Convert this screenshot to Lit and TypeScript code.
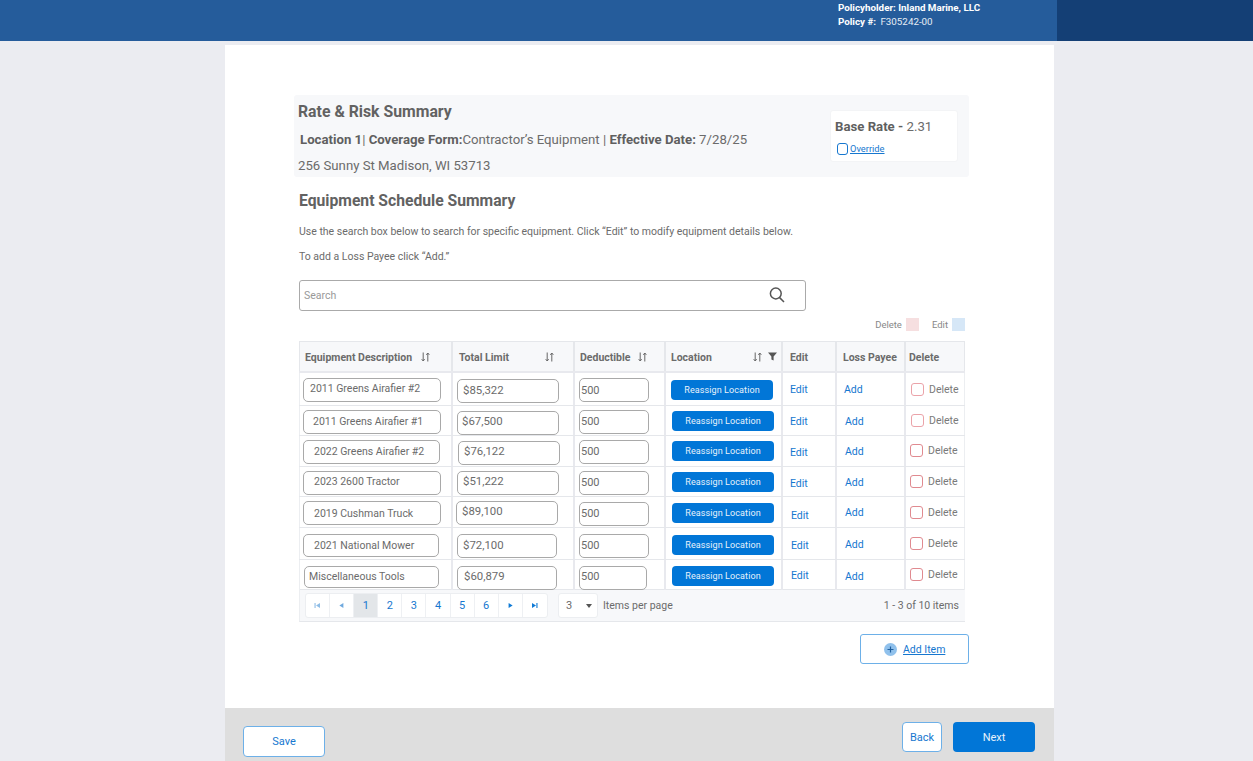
import { LitElement, html, css, svg } from "lit";
import { customElement } from "lit/decorators.js";

type Row = {
  name: string; limit: string; h: number;
  d: number[]; // x, y, w, h, text pad, text lift
  t: number[]; // x, y, w, text pad, text lift
  ded: number[]; // x, y, w, text lift
  btn: number[];
  edit: number[]; add: number[]; del: number[];
  delc: string;
};

const pink = "#eba3a9";
const red = "#e08a90";

const rows: Row[] = [
  { name: "2011 Greens Airafier #2", limit: "$85,322", h: 33, d: [3, 5, 138, 24, 6, 3], t: [4, 6, 102, 5, 2], ded: [4, 5, 70, 0], btn: [5, 7], edit: [7, 10], add: [7, 10], del: [5, 10], delc: pink },
  { name: "2011 Greens Airafier #1", limit: "$67,500", h: 30, d: [3, 4, 138, 24, 9, 2], t: [4, 5, 102, 4, 4], ded: [4, 4, 70, 2], btn: [6, 5], edit: [7, 9], add: [8, 9], del: [5, 8], delc: pink },
  { name: "2022 Greens Airafier #2", limit: "$76,122", h: 31, d: [3, 4, 137, 24, 10, 2], t: [5, 5, 102, 5, 5], ded: [4, 4, 70, 2], btn: [6, 5], edit: [7, 10], add: [8, 9], del: [4, 8], delc: red },
  { name: "2023 2600 Tractor", limit: "$51,222", h: 30, d: [3, 4, 138, 24, 10, 3], t: [4, 4, 102, 5, 5], ded: [4, 4, 70, 2], btn: [6, 5], edit: [7, 10], add: [8, 9], del: [4, 8], delc: red },
  { name: "2019 Cushman Truck", limit: "$89,100", h: 31, d: [3, 4, 138, 24, 10, 0], t: [3, 4, 102, 5, 4], ded: [4, 5, 70, 2], btn: [6, 6], edit: [8, 12], add: [8, 9], del: [4, 9], delc: red },
  { name: "2021 National Mower", limit: "$72,100", h: 32, d: [3, 6, 136, 23, 10, 0], t: [4, 6, 100, 5, 3], ded: [4, 6, 70, 2], btn: [6, 7], edit: [8, 11], add: [8, 10], del: [4, 9], delc: red },
  { name: "Miscellaneous Tools", limit: "$60,879", h: 30, d: [4, 6, 135, 22, 4, 2], t: [4, 6, 100, 6, 4], ded: [4, 6, 68, 3], btn: [6, 6], edit: [8, 9], add: [8, 10], del: [4, 8], delc: red },
];

const sortIcon = svg`<svg width="9" height="10" viewBox="0 0 9 10" fill="none" stroke="#666" stroke-width="1"><path d="M2.2 0.5V9M0.7 7.2L2.2 9L3.7 7.2"/><path d="M6.8 9.5V1M5.3 2.8L6.8 1L8.3 2.8"/></svg>`;
const filterIcon = svg`<svg width="9" height="9" viewBox="0 0 9 9"><path d="M0 .5H9L5.6 4.4V8.6L3.4 7.4V4.4Z" fill="#555"/></svg>`;
const first = svg`<svg width="7" height="7" viewBox="0 0 7 7" fill="#8fbde6"><path d="M.5 1H1.6V6H.5ZM6 1V6L2 3.5Z"/></svg>`;
const prev = svg`<svg width="7" height="7" viewBox="0 0 7 7" fill="#6fa9de"><path d="M5.4 1V6L1.4 3.5Z"/></svg>`;
const next = svg`<svg width="7" height="7" viewBox="0 0 7 7" fill="#0f7ad6"><path d="M1.6 1V6L5.6 3.5Z"/></svg>`;
const last = svg`<svg width="7" height="7" viewBox="0 0 7 7" fill="#0f7ad6"><path d="M1 1V6L5 3.5ZM5.4 1H6.5V6H5.4Z"/></svg>`;

@customElement("app-root")
export class AppRoot extends LitElement {
  static styles = css`
    :host { display: block; height: 761px; overflow: hidden; background: #ebecf1; font-family: Roboto, "Liberation Sans", sans-serif; color: #6b6b6b; }
    .top { height: 41px; background: #255c9b; display: flex; box-sizing: border-box; }
    .top-main { flex: 1; padding: 1px 0 0 838px; color: #fff; font-size: 9.8px; line-height: 14px; font-weight: 700; }
    .top-main .val { font-weight: 400; margin-left: 2px; color: #e6edf5; }
    .top-side { width: 196px; background: #143f75; }
    .panel { margin: 4px 0 0 225px; width: 829px; height: 663px; box-sizing: border-box; background: #fff; padding: 50px 0 0 69px; }
    .summary { width: 675px; height: 82px; background: #f7f8fa; border-radius: 3px; display: flex; justify-content: space-between; box-sizing: border-box; padding-left: 4px; }
    .summary h2 { margin: 7px 0 0; font-size: 15.8px; line-height: 20px; font-weight: 700; color: #626262; }
    .loc { margin: 8px 0 0 2px; font-size: 13.2px; line-height: 20px; }
    .addr { margin: 6px 0 0; font-size: 13.2px; line-height: 20px; }
    b { font-weight: 700; color: #5f5f5f; }
    .rate { width: 128px; height: 52px; margin: 15px 11px 0 0; background: #fff; border-radius: 3px; box-sizing: border-box; padding: 8px 0 0 4px; font-size: 13.2px; line-height: 16px; border: 1px solid #f3f4f6; }
    .override { display: flex; align-items: center; gap: 2px; margin: 7px 0 0 2px; font-size: 9.3px; line-height: 13px; color: #1677cf; text-decoration: underline; }
    .cb { width: 9px; height: 10px; border: 1px solid #1677cf; border-radius: 3px; }
    .body { padding-left: 5px; width: 670px; }
    .body h3 { margin: 13px 0 0; font-size: 15.7px; line-height: 22px; font-weight: 700; color: #626262; }
    .body p { margin: 0; font-size: 10.5px; line-height: 14px; color: #6b6b6b; }
    .p1 { padding-top: 13px; }
    .p2 { padding-top: 11px; }
    .search { margin-top: 16px; width: 507px; height: 31px; box-sizing: border-box; border: 1px solid #aaa; border-radius: 3px; display: flex; align-items: center; justify-content: space-between; padding: 0 20px 0 4px; font-size: 10.5px; color: #999; }
    .search svg { margin-bottom: 2px; }
    .legend { display: flex; justify-content: flex-end; align-items: center; height: 13px; margin-top: 7px; font-size: 9.5px; color: #888; width: 666px; }
    .sw { width: 13px; height: 13px; margin-left: 4px; }
    .sw.del { background: #f6dfe0; margin-right: 13px; }
    .sw.ed { background: #d6e7f7; }
    .table { margin-top: 10px; width: 666px; }
    .row { display: grid; grid-template-columns: 154px 122px 91px 117px 54px 69px 59px; border-bottom: 1px solid #e5e7eb; box-sizing: border-box; }
    .row.head { height: 32px; background: #f7f8fa; border-top: 1px solid #e5e7eb; border-bottom: 2px solid #e8e9ee; font-size: 10.5px; font-weight: 700; color: #6b6b6b; }
    .hc { display: flex; align-items: center; border-right: 2px solid #e5e7eb; padding: 1px 0 0 6px; box-sizing: border-box; }
    .hc.c1 { border-left: 1px solid #e5e7eb; padding-left: 5px; }
    .hc.c3, .hc.c4 { padding-left: 5px; }
    .hc.c5 { padding-left: 7px; }
    .hc.c7 { border-right: 1px solid #e5e7eb; padding-left: 3px; }
    .hc .ic { margin-left: auto; display: flex; gap: 6px; }
    .hc.c1 .ic { margin-left: 9px; }
    .hc.c2 .ic { margin-right: 19px; }
    .hc.c3 .ic { margin-left: 8px; margin-right: 16px; }
    .hc.c4 .ic { margin-right: 4px; }
    .cell { border-right: 2px solid #e8e9ee; box-sizing: border-box; font-size: 11px; min-width: 0; }
    .cell:first-child { border-left: 1px solid #eceef1; }
    .cell:last-child { border-right: 1px solid #eceef1; }
    .input { display: flex; align-items: center; box-sizing: border-box; border: 1px solid #a9a9a9; border-radius: 5px; color: #6b6b6b; white-space: nowrap; }
    .name { font-size: 10.5px; }
    .lim { height: 24px; font-size: 11.4px; }
    .ded { height: 24px; padding-left: 1px; font-size: 11px; }
    .reassign { width: 102px; height: 20px; border-radius: 4px; background: #0176d7; color: #e8f2fb; display: flex; align-items: center; justify-content: center; font-size: 9px; letter-spacing: 0.1px; }
    .link { color: #1677cf; font-size: 10.5px; line-height: 13px; }
    .del { display: flex; align-items: center; gap: 5px; font-size: 10.5px; color: #7a7a7a; line-height: 13px; }
    .box { width: 11px; height: 11px; border-radius: 3px; border: 1px solid; }
    .pager { height: 32px; width: 666px; background: #f7f8fa; border-bottom: 1px solid #e5e7eb; border-left: 1px solid #eceef1; box-sizing: border-box; display: flex; align-items: center; padding: 3px 6px 3px 5px; font-size: 10.5px; }
    .pages { display: flex; height: 25px; border: 1px solid #eceef1; border-radius: 3px; background: #fff; box-sizing: border-box; }
    .pg { width: 24.1px; box-sizing: border-box; display: flex; align-items: center; justify-content: center; border-right: 1px solid #eef0f3; color: #1677cf; font-size: 11px; }
    .pg:last-child { border-right: 0; }
    .pg.on { background: #e3e6e9; }
    .sel { margin-left: 10px; width: 40px; height: 25px; box-sizing: border-box; border: 1px solid #eceef1; border-radius: 3px; background: #fff; display: flex; align-items: center; justify-content: space-between; padding: 0 5px 0 7px; font-size: 11px; }
    .caret { width: 0; height: 0; border-left: 3px solid transparent; border-right: 3px solid transparent; border-top: 4px solid #555; }
    .ipp { margin-left: 5px; }
    .count { margin-left: auto; }
    .additem { margin: 12px 0 0 561px; width: 109px; height: 30px; box-sizing: border-box; border: 1px solid #6db0e8; border-radius: 3px; display: flex; align-items: center; padding-left: 23px; gap: 6px; color: #1677cf; font-size: 10.5px; text-decoration: underline; }
    .plus { width: 13px; height: 13px; border-radius: 50%; background: #90c1ec; display: flex; align-items: center; justify-content: center; }
    .footer { margin-left: 225px; width: 829px; height: 53px; background: #dedede; display: flex; box-sizing: border-box; padding: 14px 19px 0 18px; align-items: flex-start; font-size: 11px; }
    .btn { display: flex; align-items: center; justify-content: center; box-sizing: border-box; border-radius: 4px; height: 30px; }
    .btn.o { background: #fff; border: 1px solid #6db0e8; color: #1677cf; }
    .save { width: 82px; height: 31px; margin-top: 4px; }
    .back { width: 40px; margin-left: auto; }
    .next { width: 82px; margin-left: 11px; background: #0176d7; color: #e8f2fb; }
  `;

  render() {
    return html`
      <div class="top">
        <div class="top-main">
          <div>Policyholder: Inland Marine, LLC</div>
          <div>Policy #: <span class="val">F305242-00</span></div>
        </div>
        <div class="top-side"></div>
      </div>
      <div class="panel">
        <div class="summary">
          <div>
            <h2>Rate &amp; Risk Summary</h2>
            <div class="loc"><b>Location 1</b>| <b>Coverage Form:</b>Contractor’s Equipment | <b>Effective Date:</b> 7/28/25</div>
            <div class="addr">256 Sunny St Madison, WI 53713</div>
          </div>
          <div class="rate">
            <div><b>Base Rate -</b> 2.31</div>
            <div class="override"><span class="cb"></span>Override</div>
          </div>
        </div>
        <div class="body">
          <h3>Equipment Schedule Summary</h3>
          <p class="p1">Use the search box below to search for specific equipment. Click “Edit” to modify equipment details below.</p>
          <p class="p2">To add a Loss Payee click “Add.”</p>
          <div class="search">
            <span>Search</span>
            <svg width="16" height="16" viewBox="0 0 16 16" fill="none" stroke="#555" stroke-width="1.5"><circle cx="6.8" cy="6.5" r="5.4"/><path d="M10.6 10.6L15 15"/></svg>
          </div>
          <div class="legend">Delete<span class="sw del"></span>Edit<span class="sw ed"></span></div>
          <div class="table">
            <div class="row head">
              <div class="hc c1">Equipment Description<span class="ic">${sortIcon}</span></div>
              <div class="hc c2">Total Limit<span class="ic">${sortIcon}</span></div>
              <div class="hc c3">Deductible<span class="ic">${sortIcon}</span></div>
              <div class="hc c4">Location<span class="ic">${sortIcon}${filterIcon}</span></div>
              <div class="hc c5">Edit</div>
              <div class="hc c6">Loss Payee</div>
              <div class="hc c7">Delete</div>
            </div>
            ${rows.map(r => html`
              <div class="row" style="height:${r.h}px">
                <div class="cell"><div class="input name" style="margin:${r.d[1]}px 0 0 ${r.d[0]}px;width:${r.d[2]}px;height:${r.d[3]}px;padding-left:${r.d[4]}px;padding-bottom:${r.d[5]}px">${r.name}</div></div>
                <div class="cell"><div class="input lim" style="margin:${r.t[1]}px 0 0 ${r.t[0]}px;width:${r.t[2]}px;padding-left:${r.t[3]}px;padding-bottom:${r.t[4]}px">${r.limit}</div></div>
                <div class="cell"><div class="input ded" style="margin:${r.ded[1]}px 0 0 ${r.ded[0]}px;width:${r.ded[2]}px;padding-bottom:${r.ded[3]}px">500</div></div>
                <div class="cell"><div class="reassign" style="margin:${r.btn[1]}px 0 0 ${r.btn[0]}px">Reassign Location</div></div>
                <div class="cell"><div class="link" style="margin:${r.edit[1]}px 0 0 ${r.edit[0]}px">Edit</div></div>
                <div class="cell"><div class="link" style="margin:${r.add[1]}px 0 0 ${r.add[0]}px">Add</div></div>
                <div class="cell"><div class="del" style="margin:${r.del[1]}px 0 0 ${r.del[0]}px"><span class="box" style="border-color:${r.delc}"></span>Delete</div></div>
              </div>`)}
            <div class="pager">
              <div class="pages">
                <div class="pg">${first}</div><div class="pg">${prev}</div>
                <div class="pg on">1</div><div class="pg">2</div><div class="pg">3</div><div class="pg">4</div><div class="pg">5</div><div class="pg">6</div>
                <div class="pg">${next}</div><div class="pg">${last}</div>
              </div>
              <div class="sel"><span>3</span><span class="caret"></span></div>
              <span class="ipp">Items per page</span>
              <span class="count">1 - 3 of 10 items</span>
            </div>
          </div>
          <div class="additem"><span class="plus"><svg width="7" height="7" viewBox="0 0 7 7" stroke="#1f5f9f" stroke-width="1.2"><path d="M3.5 .5V6.5M.5 3.5H6.5"/></svg></span>Add Item</div>
        </div>
      </div>
      <div class="footer">
        <div class="btn o save">Save</div>
        <div class="btn o back">Back</div>
        <div class="btn next">Next</div>
      </div>
    `;
  }
}
